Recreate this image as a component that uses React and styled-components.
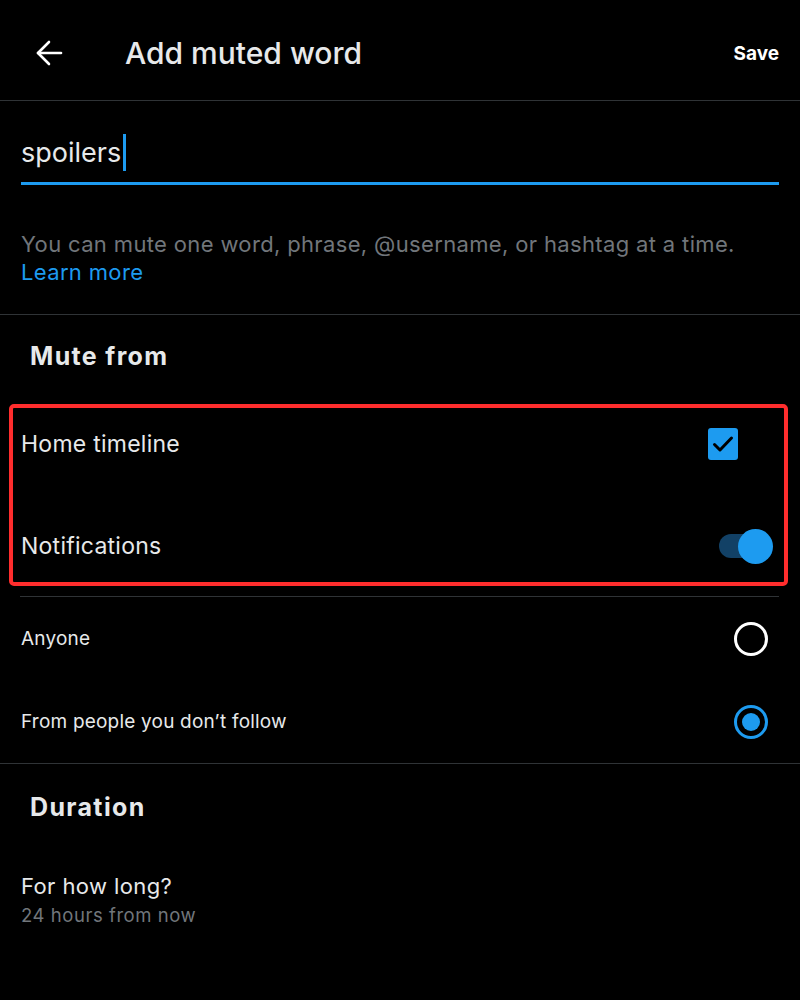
import { useState } from 'react'
import styled, { createGlobalStyle } from 'styled-components'

const GlobalStyle = createGlobalStyle`
  body {
    margin: 0;
    background: #000000;
    font-family: Inter, 'Noto Sans', sans-serif;
    -webkit-font-smoothing: antialiased;
  }
`

const Screen = styled.div`
  width: 800px;
  min-height: 100vh;
  background: #000000;
  color: #e7e9ea;
`

const Header = styled.header`
  display: flex;
  align-items: center;
  box-sizing: border-box;
  height: 101px;
  padding: 6px 21px 0 35px;
  border-bottom: 1px solid #2f3336;
`

const BackButton = styled.button`
  display: flex;
  padding: 0;
  margin-right: 62px;
  border: 0;
  background: none;
  color: #ffffff;
  cursor: pointer;
`

const Title = styled.h1`
  flex: 1;
  margin: 0;
  font-size: 30px;
  font-weight: 500;
  color: #e7e9ea;
`

const SaveButton = styled.button`
  padding: 0;
  border: 0;
  background: none;
  color: #ffffff;
  font-family: inherit;
  font-size: 19px;
  font-weight: 700;
`

const Field = styled.div`
  display: flex;
  align-items: center;
  margin: 0 21px;
  padding: 33px 0 11px;
  border-bottom: 3px solid #1d9bf0;
  font-size: 27px;
  line-height: 36px;
  color: #e7e9ea;
`

const Caret = styled.span`
  width: 3px;
  height: 37px;
  margin-left: 2px;
  background: #1d9bf0;
`

const Helper = styled.p`
  margin: 0;
  padding: 45px 21px 28px;
  border-bottom: 1px solid #2f3336;
  font-size: 22px;
  line-height: 28px;
  letter-spacing: 0.35px;
  color: #71767b;

  a {
    display: block;
    color: #1d9bf0;
    text-decoration: none;
  }
`

const SectionTitle = styled.h2`
  margin: 0;
  padding: ${(p) => p.$top}px 30px 0;
  font-size: 25px;
  line-height: 30px;
  font-weight: 700;
  letter-spacing: 1.35px;
  color: #e7e9ea;
`

const Highlight = styled.div`
  display: grid;
  gap: 30px;
  margin: 33px 12px 0 9px;
  padding: 0 11px 0 8px;
  border: 4px solid #ff2d2d;
  border-radius: 5px;
`

const OptionRow = styled.label`
  display: flex;
  align-items: center;
  justify-content: space-between;
  height: 72px;
  font-size: 23px;
  letter-spacing: 0.25px;
  color: #e7e9ea;
`

const CheckBox = styled.span`
  display: flex;
  align-items: center;
  justify-content: center;
  width: 30px;
  height: 32px;
  margin-right: 35px;
  border-radius: 3px;
  background: ${(p) => (p.$checked ? '#1d9bf0' : 'transparent')};
`

const Toggle = styled.span`
  position: relative;
  display: flex;
  align-items: center;
  width: 54px;
  height: 35px;

  &::before {
    content: '';
    width: 42px;
    height: 24px;
    border-radius: 12px;
    background: #124166;
  }

  &::after {
    content: '';
    position: absolute;
    right: 0;
    top: 0;
    width: 35px;
    height: 35px;
    border-radius: 50%;
    background: #1d9bf0;
  }
`

const Rule = styled.hr`
  margin: 10px 21px 0 20px;
  border: 0;
  border-top: 1px solid #2f3336;
`

const RadioList = styled.div`
  border-bottom: 1px solid #2f3336;
`

const RadioRow = styled.label`
  display: flex;
  align-items: center;
  justify-content: space-between;
  height: 83px;
  padding: 0 32px 0 21px;
  font-size: 19px;
  letter-spacing: 0.2px;
  color: #e7e9ea;
  cursor: pointer;
`

const Radio = styled.span`
  display: flex;
  align-items: center;
  justify-content: center;
  box-sizing: border-box;
  width: 34px;
  height: 34px;
  border-radius: 50%;
  border: 3px solid ${(p) => (p.$on ? '#1d9bf0' : '#ffffff')};

  &::after {
    content: '';
    width: 18px;
    height: 18px;
    border-radius: 50%;
    background: ${(p) => (p.$on ? '#1d9bf0' : 'transparent')};
  }
`

const DurationRow = styled.div`
  padding: 51px 21px 0;
`

const RowLabel = styled.div`
  font-size: 22px;
  line-height: 26px;
  letter-spacing: 0.4px;
  color: #e7e9ea;
`

const RowValue = styled.div`
  margin-top: 5px;
  font-size: 18.5px;
  line-height: 22px;
  letter-spacing: 0.55px;
  color: #71767b;
`

const ArrowLeft = () => (
  <svg width="28" height="28" viewBox="0 0 28 28" fill="none" stroke="currentColor" strokeWidth="2.6" strokeLinecap="round" strokeLinejoin="round">
    <path d="M26 14H3" />
    <path d="M14 3 3 14l11 11" />
  </svg>
)

const Check = () => (
  <svg width="24" height="24" viewBox="0 0 24 24" fill="none" stroke="#000000" strokeWidth="3" strokeLinecap="round" strokeLinejoin="round">
    <path d="M3.5 12.5 9 18 20.5 6" />
  </svg>
)

const audiences = ['Anyone', 'From people you don’t follow']

export default function App() {
  const [audience, setAudience] = useState(1)

  return (
    <Screen>
      <GlobalStyle />
      <Header>
        <BackButton aria-label="Back">
          <ArrowLeft />
        </BackButton>
        <Title>Add muted word</Title>
        <SaveButton>Save</SaveButton>
      </Header>

      <Field>
        spoilers
        <Caret />
      </Field>

      <Helper>
        You can mute one word, phrase, @username, or hashtag at a time.
        <a href="#learn">Learn more</a>
      </Helper>

      <SectionTitle $top={26}>Mute from</SectionTitle>
      <Highlight>
        <OptionRow>
          Home timeline
          <CheckBox $checked>
            <Check />
          </CheckBox>
        </OptionRow>
        <OptionRow>
          Notifications
          <Toggle />
        </OptionRow>
      </Highlight>
      <Rule />

      <RadioList>
        {audiences.map((label, i) => (
          <RadioRow key={label} onClick={() => setAudience(i)}>
            {label}
            <Radio $on={audience === i} />
          </RadioRow>
        ))}
      </RadioList>

      <SectionTitle $top={28}>Duration</SectionTitle>
      <DurationRow>
        <RowLabel>For how long?</RowLabel>
        <RowValue>24 hours from now</RowValue>
      </DurationRow>
    </Screen>
  )
}
